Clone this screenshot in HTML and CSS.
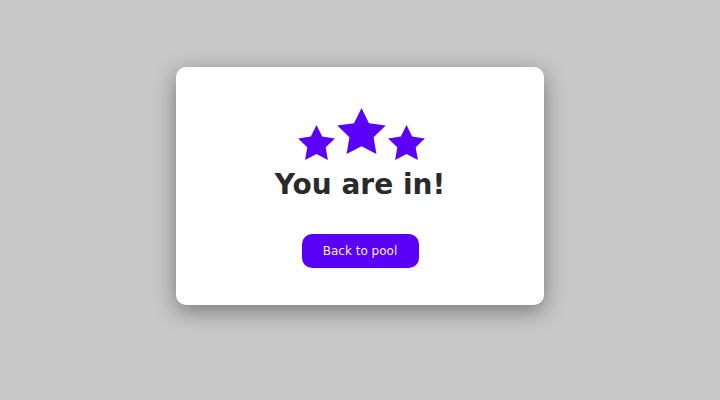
FILE: index.html
```html
<!DOCTYPE html>
<html lang="en">
<head>
  <meta charset="UTF-8">
  <meta name="viewport" content="width=device-width, initial-scale=1.0">
  <title>You are in</title>
  <link rel="stylesheet" href="styles.css">
</head>
<body>
  <div class="card">
    <div class="stars">
      <svg class="star small" viewBox="2 2 20 19.02"><polygon points="12,2 15.09,8.26 22,9.27 17,14.14 18.18,21.02 12,17.77 5.82,21.02 7,14.14 2,9.27 8.91,8.26"/></svg>
      <svg class="star big" viewBox="2 2 20 19.02"><polygon points="12,2 15.09,8.26 22,9.27 17,14.14 18.18,21.02 12,17.77 5.82,21.02 7,14.14 2,9.27 8.91,8.26"/></svg>
      <svg class="star small" viewBox="2 2 20 19.02"><polygon points="12,2 15.09,8.26 22,9.27 17,14.14 18.18,21.02 12,17.77 5.82,21.02 7,14.14 2,9.27 8.91,8.26"/></svg>
    </div>
    <h1>You are in!</h1>
    <button class="back-btn">Back to pool</button>
  </div>
</body>
</html>
```

FILE: styles.css
```css
* {
  box-sizing: border-box;
  margin: 0;
  padding: 0;
}

html,
body {
  min-height: 100vh;
}

body {
  background-color: #c8c8c8;
  font-family: 'DejaVu Sans', sans-serif;
  padding-top: 67px;
}

.card {
  width: 368px;
  height: 238px;
  margin: 0 auto;
  background-color: white;
  border-radius: 10px;
  box-shadow: 0 6px 22px rgba(0, 0, 0, 0.4);
  display: flex;
  flex-direction: column;
  align-items: center;
  padding-top: 41px;
}

.stars {
  display: flex;
  align-items: flex-end;
  gap: 2px;
  height: 52px;
  padding-left: 3px;
}

.star {
  fill: #5a00fa;
}

.star.small {
  width: 37px;
  height: 35px;
}

.star.big {
  width: 49px;
  height: 46px;
  align-self: flex-start;
}

h1 {
  margin-top: 9px;
  font-size: 28px;
  font-weight: bold;
  color: #2a2a2a;
  line-height: 32px;
}

.back-btn {
  margin-top: 33px;
  width: 117px;
  height: 34px;
  border: none;
  border-radius: 10px;
  background-color: #5a00f7;
  color: #f4efff;
  font-family: 'DejaVu Sans', sans-serif;
  font-size: 12px;
  cursor: pointer;
}
```
